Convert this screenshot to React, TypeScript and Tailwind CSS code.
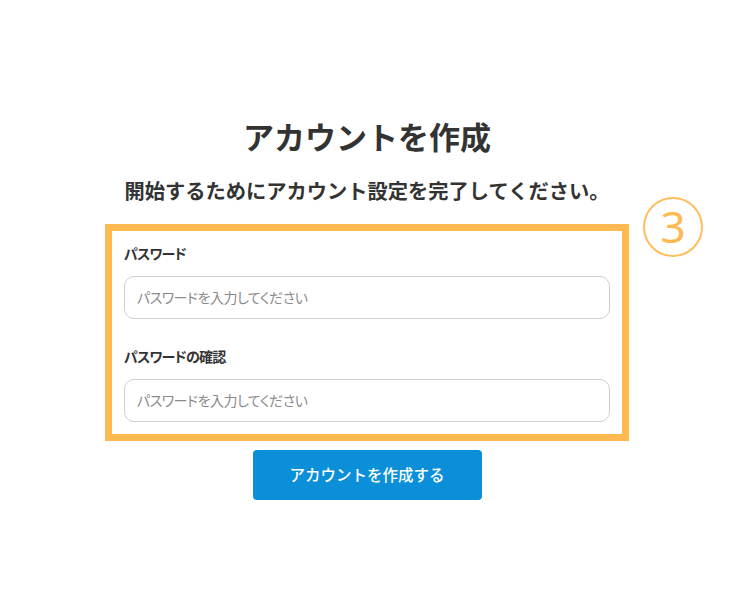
export default function App() {
  const jp = { fontFamily: '"Noto Sans CJK JP", "Noto Sans", sans-serif' };
  return (
    <div className="w-[754px] h-[603px] bg-white flex justify-center pr-[20px]" style={jp}>
      <div className="w-[524px] flex flex-col items-center pt-[117px]">
        <h1 className="text-[31px] leading-[37px] font-bold text-[#333]">アカウントを作成</h1>
        <p className="mt-[25px] text-[20.25px] leading-[24px] font-bold text-[#333] whitespace-nowrap">
          開始するためにアカウント設定を完了してください。
        </p>
        <div className="relative mt-[21px] w-[524px] border-[7px] border-[#ffb951] px-[12px] pt-[12px] pb-[12px]">
          <div className="absolute left-[531px] top-[-34px] w-[60px] h-[60px] rounded-full border-2 border-[#ffbd5c] flex items-center justify-center">
            <span className="text-[44px] leading-none font-normal text-[#ffb951] mt-[-2px]" style={{ fontFamily: '"Noto Sans", sans-serif' }}>3</span>
          </div>
          <label className="block text-[14px] leading-[20px] font-bold text-[#333] tracking-[-0.8px] [font-feature-settings:'palt']">パスワード</label>
          <div className="mt-[13px] h-[43px] w-full rounded-[10px] border border-[#cfcfcf] flex items-center px-[12px]">
            <span className="text-[14px] tracking-[-0.5px] text-[#8a8a8a] [font-feature-settings:'palt']">パスワードを入力してください</span>
          </div>
          <label className="mt-[27px] block text-[14px] leading-[20px] font-bold text-[#333] tracking-[-0.8px] [font-feature-settings:'palt']">パスワードの確認</label>
          <div className="mt-[13px] h-[43px] w-full rounded-[10px] border border-[#cfcfcf] flex items-center px-[12px]">
            <span className="text-[14px] tracking-[-0.5px] text-[#8a8a8a] [font-feature-settings:'palt']">パスワードを入力してください</span>
          </div>
        </div>
        <button className="mt-[9px] w-[229px] h-[50px] rounded-[4px] bg-[#0a8fd8] text-white text-[15.5px] font-medium flex items-center justify-center">
          アカウントを作成する
        </button>
      </div>
    </div>
  );
}
